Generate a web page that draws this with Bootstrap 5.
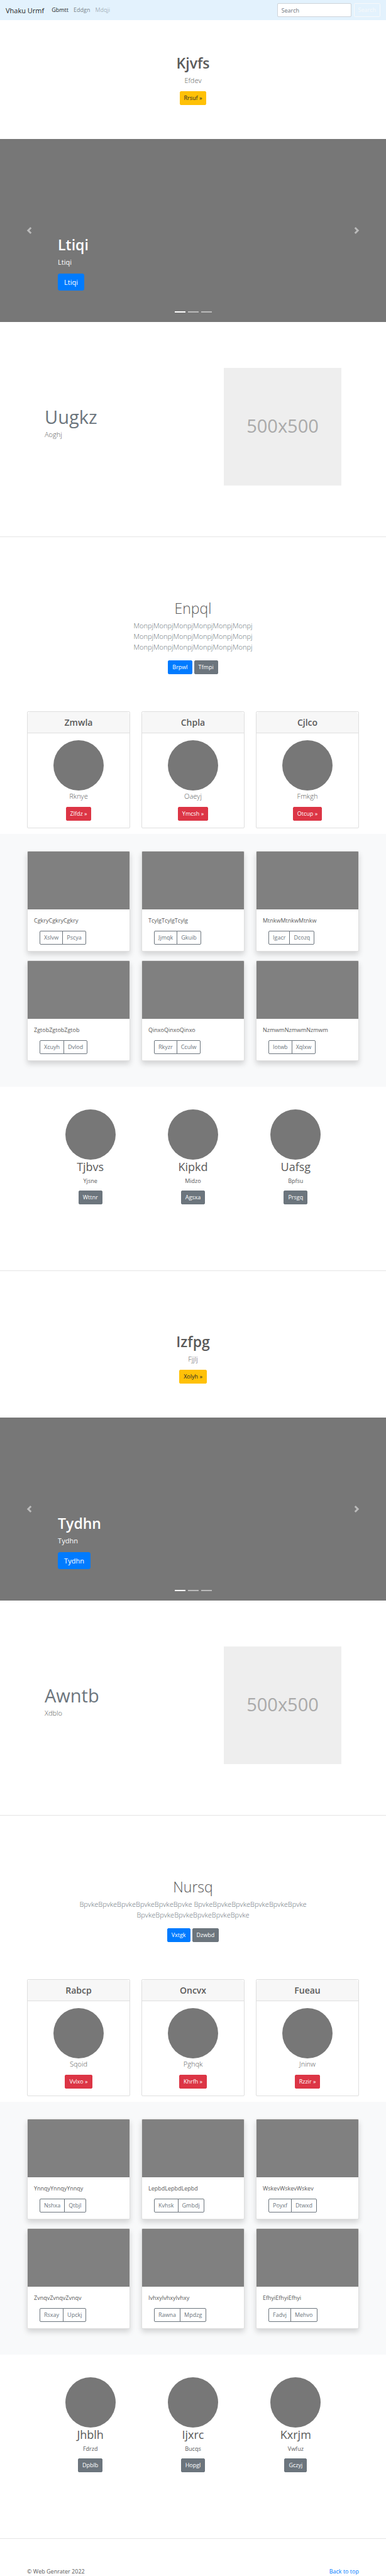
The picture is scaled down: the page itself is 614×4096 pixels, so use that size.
<!DOCTYPE html>
<html lang="en">
<head>
<meta charset="utf-8">
<meta name="viewport" content="width=device-width, initial-scale=1">
<title>Vhaku Urmf</title>
<link href="https://cdn.jsdelivr.net/npm/bootstrap@5.3.0/dist/css/bootstrap.min.css" rel="stylesheet">
<style>
  body { font-family: "Open Sans", "Noto Sans", sans-serif; font-size: 9px; line-height: 14px; color: #5a5a5a; background: #fff; }
  h1, h2, h4, p { margin: 0; }
  h1 { font-size: 23px; line-height: 27px; font-weight: 600; margin-bottom: 5px; }
  h2 { font-size: 18px; line-height: 22px; font-weight: 400; margin-bottom: 5px; }
  h4 { font-size: 14px; line-height: 17px; font-weight: 600; }
  .intro { font-size: 11px; line-height: 17px; font-weight: 300; }
  .thin { font-weight: 300; }
  .muted { color: #6c757d; }

  .btn { display: inline-block; vertical-align: top; font-size: 9px; line-height: 14px; padding: 3px 6px; border-radius: 2px; }
  .btn-group { vertical-align: top; }
  .btn-warning { --bs-btn-bg: #ffc107; --bs-btn-border-color: #ffc107; --bs-btn-color: #212529; }
  .btn-primary { --bs-btn-bg: #007bff; --bs-btn-border-color: #007bff; }
  .btn-big { font-size: 11px; line-height: 17px; padding: 4px 9px; border-radius: 3px; }

  .topbar { background: #e3f2fd; padding: 5px 9px; min-height: 32px; --bs-navbar-nav-link-padding-x: 0; }
  .topbar .navbar-brand { font-size: 11px; line-height: 17px; padding: 0; margin: 0 12px 0 0; color: rgba(0,0,0,.9); }
  .topbar .nav-link { padding: 0; color: rgba(0,0,0,.5); }
  .topbar .nav-link.active { color: rgba(0,0,0,.9); }
  .topbar .nav-link.disabled { color: rgba(0,0,0,.3); }
  .topbar .navbar-nav { gap: 8px; }
  .topbar .form-control { font-size: 9px; line-height: 14px; min-height: 22px; height: 22px; width: 118px; padding: 3px 6px; border-color: #ced4da; border-radius: 2px; }
  .topbar .form-control::placeholder { color: #6c757d; }

  .welcome { padding: 55px 43px 54px; }
  .welcome .intro { margin-bottom: 9px; }

  .slide-panel { height: 291px; background: #777; }
  .carousel .carousel-caption { bottom: 50px; padding: 0; text-align: left; }
  .carousel-caption p { font-size: 11px; line-height: 17px; margin-bottom: 10px; }
  .carousel-control-prev-icon, .carousel-control-next-icon { width: 11px; height: 11px; background: none; }
  .carousel-control-prev-icon svg, .carousel-control-next-icon svg { display: block; }
  .carousel .carousel-indicators { margin-bottom: 15px; }
  .carousel .carousel-indicators [data-bs-target] { width: 17px; height: 2px; margin: 0 2px; border: 0; }

  .feature { padding: 73px 71px 81px; }
  .feature h2 { font-size: 29px; line-height: 34px; color: #6c757d; margin-bottom: 2px; }
  .feature .intro { margin-bottom: 13px; }
  .placeholder-box { width: 187px; aspect-ratio: 1; padding-bottom: 4px; background: #eee; color: #aaa; font-size: 29px; line-height: 29px; }
  hr { margin: 0; border: 0; height: 1px; background: #e5e5e5; opacity: 1; }

  .pitch { padding: 100px 123px 59px; }
  .pitch .intro { margin-bottom: 13px; }
  .pair { gap: 3px; }
  .page-inner { padding-left: 43px; padding-right: 43px; }
  .tri { display: grid; grid-template-columns: repeat(3, minmax(0, 1fr)); gap: 14px 18px; }
  .card { border-color: #dfdfdf; border-radius: 2px; }
  .card-header { background: #f7f7f7; padding: 8px 0; border-color: #dfdfdf; }
  .plan .card-body { padding: 11px; }
  .plan .intro { margin-bottom: 9px; }
  .disc { width: 80px; height: 80px; border-radius: 50%; background: #777; margin: 0 auto; }

  .album { background: #f8f9fa; margin-top: 9px; padding-top: 27px; padding-bottom: 41px; }
  .album .card { box-shadow: 0 5px 9px rgba(0,0,0,.15); }
  .thumb { height: 92px; background: #808080; border-radius: 1px 1px 0 0; }
  .album .card-body { padding: 11px 10px 10px; }
  .album p { margin-bottom: 9px; }
  .album .btn-group { margin-left: 9px; }

  .team { padding: 36px 62px 105px; }
  .team .tri { gap: 0; }
  .team p { margin-bottom: 8px; }
  .gap-row { height: 44px; }
  footer { padding-top: 45px; }
  footer a { color: #007bff; text-decoration: none; }
</style>
</head>
<body>
<nav class="navbar navbar-expand topbar" id="top">
  <a class="navbar-brand" href="#">Vhaku Urmf</a>
  <div class="navbar-nav me-auto">
    <a class="nav-link active" href="#">Gbmtt</a>
    <a class="nav-link" href="#">Eddgn</a>
    <a class="nav-link disabled" href="#" aria-disabled="true">Mdqji</a>
  </div>
  <form class="d-flex gap-1" role="search">
    <input class="form-control" type="search" placeholder="Search" aria-label="Search">
    <button class="btn btn-outline-light" type="button">Search</button>
  </form>
</nav>

<main>
  <section class="welcome text-center">
    <h1>Kjvfs</h1>
    <p class="intro">Efdev</p>
    <button class="btn btn-warning" type="button">Rrsuf »</button>
  </section>

  <div id="slidesOne" class="carousel slide">
    <div class="carousel-indicators">
      <button type="button" data-bs-target="#slidesOne" data-bs-slide-to="0" class="active" aria-label="Slide 1"></button>
      <button type="button" data-bs-target="#slidesOne" data-bs-slide-to="1" aria-label="Slide 2"></button>
      <button type="button" data-bs-target="#slidesOne" data-bs-slide-to="2" aria-label="Slide 3"></button>
    </div>
    <div class="carousel-inner">
      <div class="carousel-item active">
        <div class="slide-panel"></div>
        <div class="carousel-caption">
          <h1>Ltiqi</h1>
          <p>Ltiqi</p>
          <button class="btn btn-primary btn-big" type="button">Ltiqi</button>
        </div>
      </div>
    </div>
    <button class="carousel-control-prev" type="button" data-bs-target="#slidesOne" data-bs-slide="prev" aria-label="Previous">
      <span class="carousel-control-prev-icon"><svg width="11" height="11" viewBox="0 0 8 8" fill="#fff"><path d="M5.25 0l-4 4 4 4 1.5-1.5-2.5-2.5 2.5-2.5-1.5-1.5z"/></svg></span>
    </button>
    <button class="carousel-control-next" type="button" data-bs-target="#slidesOne" data-bs-slide="next" aria-label="Next">
      <span class="carousel-control-next-icon"><svg width="11" height="11" viewBox="0 0 8 8" fill="#fff"><path d="M2.75 0l-1.500 1.500 2.500 2.500-2.500 2.500 1.500 1.500 4-4-4-4z"/></svg></span>
    </button>
  </div>

  <section class="feature d-flex justify-content-between align-items-center">
    <div>
      <h2>Uugkz</h2>
      <p class="intro">Aoghj</p>
    </div>
    <div class="placeholder-box d-flex align-items-center justify-content-center">500x500</div>
  </section>
  <hr>

  <section class="pitch text-center">
    <h1 class="thin">Enpql</h1>
    <p class="intro muted">MonpjMonpjMonpjMonpjMonpjMonpj MonpjMonpjMonpjMonpjMonpjMonpj MonpjMonpjMonpjMonpjMonpjMonpj</p>
    <div class="d-flex justify-content-center pair">
      <button class="btn btn-primary" type="button">Brpwl</button>
      <button class="btn btn-secondary" type="button">Tfmpi</button>
    </div>
  </section>

  <section class="page-inner">
    <div class="tri text-center">
      <div class="card plan"><div class="card-header"><h4>Zmwla</h4></div>
        <div class="card-body"><div class="disc"></div><p class="intro">Rknye</p><button class="btn btn-danger" type="button">Zlfdz »</button></div></div>
      <div class="card plan"><div class="card-header"><h4>Chpla</h4></div>
        <div class="card-body"><div class="disc"></div><p class="intro">Oaeyj</p><button class="btn btn-danger" type="button">Ymcsh »</button></div></div>
      <div class="card plan"><div class="card-header"><h4>Cjlco</h4></div>
        <div class="card-body"><div class="disc"></div><p class="intro">Fmkgh</p><button class="btn btn-danger" type="button">Otcup »</button></div></div>
    </div>
  </section>

  <section class="album page-inner">
    <div class="tri">
      <div class="card"><div class="thumb"></div><div class="card-body"><p>CgkryCgkryCgkry</p>
        <div class="btn-group"><button type="button" class="btn btn-outline-secondary">Xslvw</button><button type="button" class="btn btn-outline-secondary">Pscya</button></div></div></div>
      <div class="card"><div class="thumb"></div><div class="card-body"><p>TcylgTcylgTcylg</p>
        <div class="btn-group"><button type="button" class="btn btn-outline-secondary">Jjmqk</button><button type="button" class="btn btn-outline-secondary">Gkuib</button></div></div></div>
      <div class="card"><div class="thumb"></div><div class="card-body"><p>MtnkwMtnkwMtnkw</p>
        <div class="btn-group"><button type="button" class="btn btn-outline-secondary">Igacr</button><button type="button" class="btn btn-outline-secondary">Dcozq</button></div></div></div>
      <div class="card"><div class="thumb"></div><div class="card-body"><p>ZgtobZgtobZgtob</p>
        <div class="btn-group"><button type="button" class="btn btn-outline-secondary">Xcuyh</button><button type="button" class="btn btn-outline-secondary">Dvlod</button></div></div></div>
      <div class="card"><div class="thumb"></div><div class="card-body"><p>QinxoQinxoQinxo</p>
        <div class="btn-group"><button type="button" class="btn btn-outline-secondary">Rkyzr</button><button type="button" class="btn btn-outline-secondary">Cculw</button></div></div></div>
      <div class="card"><div class="thumb"></div><div class="card-body"><p>NzmwmNzmwmNzmwm</p>
        <div class="btn-group"><button type="button" class="btn btn-outline-secondary">Iotwb</button><button type="button" class="btn btn-outline-secondary">Xqlxw</button></div></div></div>
    </div>
  </section>

  <section class="team text-center">
    <div class="tri">
      <div><div class="disc"></div><h2>Tjbvs</h2><p>Yjsne</p><button class="btn btn-secondary" type="button">Wttnr</button></div>
      <div><div class="disc"></div><h2>Kipkd</h2><p>Midzo</p><button class="btn btn-secondary" type="button">Agsxa</button></div>
      <div><div class="disc"></div><h2>Uafsg</h2><p>Bpfsu</p><button class="btn btn-secondary" type="button">Prsgq</button></div>
    </div>
  </section>
  <hr>
  <div class="gap-row"></div>

  <section class="welcome text-center">
    <h1>Izfpg</h1>
    <p class="intro">Fjjlj</p>
    <button class="btn btn-warning" type="button">Xolyh »</button>
  </section>

  <div id="slidesTwo" class="carousel slide">
    <div class="carousel-indicators">
      <button type="button" data-bs-target="#slidesTwo" data-bs-slide-to="0" class="active" aria-label="Slide 1"></button>
      <button type="button" data-bs-target="#slidesTwo" data-bs-slide-to="1" aria-label="Slide 2"></button>
      <button type="button" data-bs-target="#slidesTwo" data-bs-slide-to="2" aria-label="Slide 3"></button>
    </div>
    <div class="carousel-inner">
      <div class="carousel-item active">
        <div class="slide-panel"></div>
        <div class="carousel-caption">
          <h1>Tydhn</h1>
          <p>Tydhn</p>
          <button class="btn btn-primary btn-big" type="button">Tydhn</button>
        </div>
      </div>
    </div>
    <button class="carousel-control-prev" type="button" data-bs-target="#slidesTwo" data-bs-slide="prev" aria-label="Previous">
      <span class="carousel-control-prev-icon"><svg width="11" height="11" viewBox="0 0 8 8" fill="#fff"><path d="M5.25 0l-4 4 4 4 1.5-1.5-2.5-2.5 2.5-2.5-1.5-1.5z"/></svg></span>
    </button>
    <button class="carousel-control-next" type="button" data-bs-target="#slidesTwo" data-bs-slide="next" aria-label="Next">
      <span class="carousel-control-next-icon"><svg width="11" height="11" viewBox="0 0 8 8" fill="#fff"><path d="M2.75 0l-1.500 1.500 2.500 2.500-2.500 2.500 1.500 1.500 4-4-4-4z"/></svg></span>
    </button>
  </div>

  <section class="feature d-flex justify-content-between align-items-center">
    <div>
      <h2>Awntb</h2>
      <p class="intro">Xdblo</p>
    </div>
    <div class="placeholder-box d-flex align-items-center justify-content-center">500x500</div>
  </section>
  <hr>

  <section class="pitch text-center">
    <h1 class="thin">Nursq</h1>
    <p class="intro muted">BpvkeBpvkeBpvkeBpvkeBpvkeBpvke BpvkeBpvkeBpvkeBpvkeBpvkeBpvke BpvkeBpvkeBpvkeBpvkeBpvkeBpvke</p>
    <div class="d-flex justify-content-center pair">
      <button class="btn btn-primary" type="button">Vxtgk</button>
      <button class="btn btn-secondary" type="button">Dzwbd</button>
    </div>
  </section>

  <section class="page-inner">
    <div class="tri text-center">
      <div class="card plan"><div class="card-header"><h4>Rabcp</h4></div>
        <div class="card-body"><div class="disc"></div><p class="intro">Sqoid</p><button class="btn btn-danger" type="button">Vvlxo »</button></div></div>
      <div class="card plan"><div class="card-header"><h4>Oncvx</h4></div>
        <div class="card-body"><div class="disc"></div><p class="intro">Pghqk</p><button class="btn btn-danger" type="button">Khrfh »</button></div></div>
      <div class="card plan"><div class="card-header"><h4>Fueau</h4></div>
        <div class="card-body"><div class="disc"></div><p class="intro">Jninw</p><button class="btn btn-danger" type="button">Rzzir »</button></div></div>
    </div>
  </section>

  <section class="album page-inner">
    <div class="tri">
      <div class="card"><div class="thumb"></div><div class="card-body"><p>YnnqyYnnqyYnnqy</p>
        <div class="btn-group"><button type="button" class="btn btn-outline-secondary">Nshxa</button><button type="button" class="btn btn-outline-secondary">Qtbjl</button></div></div></div>
      <div class="card"><div class="thumb"></div><div class="card-body"><p>LepbdLepbdLepbd</p>
        <div class="btn-group"><button type="button" class="btn btn-outline-secondary">Kvhsk</button><button type="button" class="btn btn-outline-secondary">Gmbdj</button></div></div></div>
      <div class="card"><div class="thumb"></div><div class="card-body"><p>WskevWskevWskev</p>
        <div class="btn-group"><button type="button" class="btn btn-outline-secondary">Poyxf</button><button type="button" class="btn btn-outline-secondary">Dtwxd</button></div></div></div>
      <div class="card"><div class="thumb"></div><div class="card-body"><p>ZvnqvZvnqvZvnqv</p>
        <div class="btn-group"><button type="button" class="btn btn-outline-secondary">Rsxay</button><button type="button" class="btn btn-outline-secondary">Upckj</button></div></div></div>
      <div class="card"><div class="thumb"></div><div class="card-body"><p>IvhxyIvhxyIvhxy</p>
        <div class="btn-group"><button type="button" class="btn btn-outline-secondary">Rawna</button><button type="button" class="btn btn-outline-secondary">Mpdzg</button></div></div></div>
      <div class="card"><div class="thumb"></div><div class="card-body"><p>EfhyiEfhyiEfhyi</p>
        <div class="btn-group"><button type="button" class="btn btn-outline-secondary">Fadvj</button><button type="button" class="btn btn-outline-secondary">Mehvo</button></div></div></div>
    </div>
  </section>

  <section class="team text-center">
    <div class="tri">
      <div><div class="disc"></div><h2>Jhblh</h2><p>Fdrzd</p><button class="btn btn-secondary" type="button">Dpblb</button></div>
      <div><div class="disc"></div><h2>Ijxrc</h2><p>Bucqs</p><button class="btn btn-secondary" type="button">Hopgl</button></div>
      <div><div class="disc"></div><h2>Kxrjm</h2><p>Vwfuz</p><button class="btn btn-secondary" type="button">Gczyj</button></div>
    </div>
  </section>
  <hr>
</main>

<footer class="page-inner d-flex justify-content-between">
  <span>© Web Genrater 2022</span>
  <a href="#top">Back to top</a>
</footer>
<script src="https://cdn.jsdelivr.net/npm/bootstrap@5.3.0/dist/js/bootstrap.bundle.min.js"></script>
</body>
</html>
